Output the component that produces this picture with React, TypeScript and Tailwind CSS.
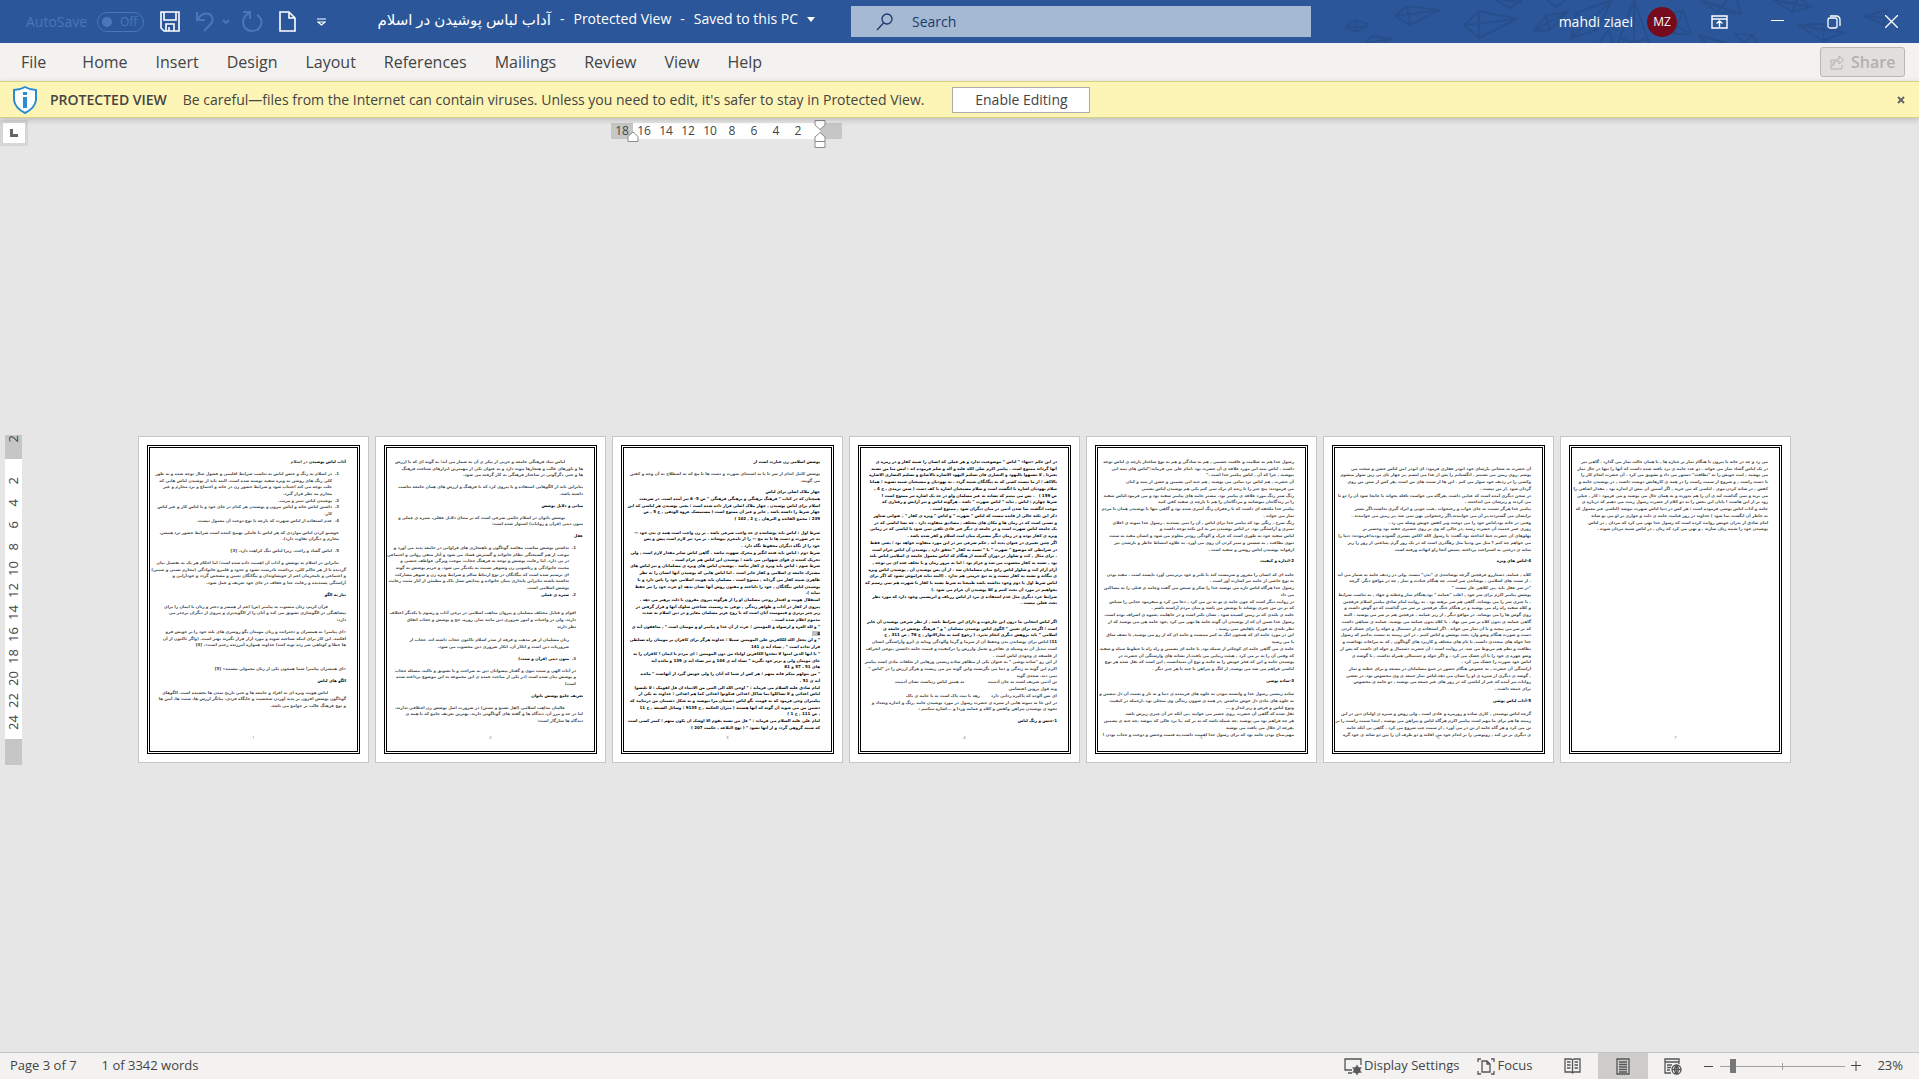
import type { ReactNode } from "react";

type Line = {
  text?: string;
  bold?: boolean;
  num?: string;
  indent?: "first" | "list" | "block";
  // tall blank between two paragraphs
  gap?: boolean;
  lead?: string;
  marked?: boolean;
};

const gap: Line = { gap: true };
const blank: Line = {};

function plain(...texts: string[]): Line[] {
  return texts.map((text) => ({ text }));
}

function heavy(...texts: string[]): Line[] {
  return texts.map((text) => ({ text, bold: true }));
}

function indented(indent: Line["indent"], ...texts: string[]): Line[] {
  return texts.map((text) => ({ text, indent }));
}

const pages: Line[][] = [
  [
    { lead: "آداب لباس پوشیدن", text: " در اسلام" },
    gap,
    { num: "1.", indent: "list", text: "در اسلام به رنگ و جنس لباس به تناسب شرایط اقلیمی و فصول سال توجه شده و به طور" },
    ...indented(
      "list",
      "کلی رنگ های روشن به ویژه سفید توصیه شده است. البته باید از پوشیدن لباس هایی که",
      "جلب توجه می کند اجتناب شود و شرایط حضور زن در خانه و اجتماع و نزد محارم و غیر",
      "محارم مد نظر قرار گیرد.",
    ),
    { num: "2.", indent: "list", text: "پوشیدن لباس تمیز و مرتب." },
    { num: "3.", indent: "list", text: "داشتن لباس خانه و لباس بیرون و پوشیدن هر کدام در جای خود و یا لباس کار و غیر لباس" },
    { indent: "list", text: "کار." },
    { num: "4.", indent: "list", text: "عدم استفاده از لباس شهرت که پارچه یا نوع دوخت آن معمول نیست." },
    gap,
    ...indented(
      "block",
      "خوشبو کردن لباس مواردی که هر لباس یا عاملی تهییج کننده است شرایط حضور نزد همسر،",
      "محارم و دیگران تفاوت دارد).",
    ),
    gap,
    { num: "5.", indent: "list", text: "لباس گشاد و راحت. زیرا لباس تنگ کراهت دارد. [3]" },
    gap,
    { indent: "block", text: "بنابراین در اسلام به پوشش و آداب آن اهمیت داده شده است؛ اما احکام هر یک به تفصیل بیان" },
    ...plain(
      "گردیده تا از هر حاکم کلی، برداشت نادرست نشود و حدود و قلمرو خانوادگی (محارم نسبی و سببی)",
      "و اجتماعی و نامحرمان اعم از خویشاوندان و بیگانگان تعیین و مشخص گردد و خودآرایی و",
      "آراستگی پسندیده و رعایت حیا و عفاف در جای خود تعریف و عمل شود.",
    ),
    gap,
    ...heavy("نیاز به الگو"),
    gap,
    { indent: "first", text: "قرآن کریم، زنان منسوب به پیامبر (ص) اعم از همسر و دختر و زنان با ایمان را برای" },
    ...plain("پیشاهنگی در الگوسازی تشویق می کند و آنان را از الگوپذیری و پیروی از دیگران برحذر می", "دارد:"),
    gap,
    ...plain(
      "«ای پیامبر! به همسران و دخترانت و زنان مومنان بگو روسری های بلند خود را بر خویش فرو",
      "افکنند. این کار برای اینکه شناخته شوند و مورد آزار قرار نگیرند بهتر است. (واگر تاکنون از آن",
      "ها خطا و کوتاهی سر زده توبه کنند) خداوند همواره آمرزنده رحیم است». [4]",
    ),
    gap,
    blank,
    gap,
    ...plain("«ای همسران پیامبر! شما همچون یکی از زنان معمولی نیستید» [5]"),
    gap,
    ...heavy("الگو های لباس"),
    gap,
    { indent: "first", text: "لباس هویت ویژه ای به افراد و جامعه ها و حتی تاریخ تمدن ها بخشیده است. الگوهای" },
    ...plain(
      "گوناگون پوشش افزون بر پدید آوردن شخصیت و جایگاه فردی، بیانگر ارزش ها، سنت ها، آیین ها",
      "و نوع فرهنگ غالب بر جوامع می باشد.",
    ),
  ],
  [
    { indent: "first", text: "لباس نماد فرهنگی جامعه و جزیی از پیکر ی آن به شمار می آید؛ به گونه ای که با ارزش" },
    ...plain(
      "ها و باورهای غالب و هنجارها پیوند دارد و به عنوان یکی از مهمترین ابزارهای شناخت فرهنگ",
      "ها و حتی دگرگونی در ساختار فرهنگی به کار گرفته می شود.",
    ),
    gap,
    ...plain("بنابراین باید از الگوهایی استفاده و یا پیروی کرد که با فرهنگ و ارزش های همان جامعه تناسب", "داشته باشد."),
    gap,
    ...heavy("مبانی و دلایل پوشش"),
    gap,
    { indent: "first", text: "پوشش بانوان در اسلام حکمی شرعی است که بر مبنای دلایل عقلی، سیره ی عملی و" },
    ...plain("متون دینی (قرآن و روایات) استوار شده است:"),
    gap,
    ...heavy("عقل"),
    gap,
    { num: "1.", indent: "list", text: "نداشتن پوشش مناسب مفاسد گوناگون و ناهنجاری های فراوانی در جامعه پدید می آورد و" },
    ...indented(
      "list",
      "موجب از هم گسیختگی نظام خانواده و گسترش فساد می شود و آثار منفی روانی و اجتماعی",
      "در پی دارد. اما رعایت پوشش و توجه به فرهنگ حجاب، موجب ویژگی عواطف جنسی و",
      "محبت خانوادگی و زناشویی زن وشوهر نسبت به یکدیگر می شود. و حریم پوشش به گونه",
      "ای ترسیم شده است که بیگانگان در نوع ارتباط سالم و شرایط ویژه زن و شوهر مشارکت",
      "نداشته باشند بنابراین پایداری بنیان خانواده و پیدایش نسل پاک و مطمئن از آثار مثبت رعایت",
      "پوشش اسلامی است.",
    ),
    { num: "2.", indent: "list", bold: true, text: "سیره ی عملی" },
    gap,
    blank,
    ...indented(
      "block",
      "اقوام و قبایل مختلف مسلمان و پیروان مذاهب اسلامی در برخی آداب و رسوم با یکدیگر اختلاف",
      "دارند، ولی در واجبات و امور ضروری دین مانند نماز، روزه، حج و پوشش و حجاب اتفاق",
      "نظر دارند",
    ),
    blank,
    ...indented(
      "list",
      "زنان مسلمان از هر مذهب و فرقه از صدر اسلام تاکنون حجاب داشته اند. حجاب از",
      "ضروریات دین است و انکار آن، انکار ضروری دین محسوب می شود.",
    ),
    gap,
    { num: "3.", indent: "list", bold: true, text: "متون دینی (قرآن و سنت)" },
    gap,
    ...indented(
      "block",
      "در آیات الهی و سنت نبوی و گفتار پیشوایان دین به صراحت و با تشویق و تاکید، مسئله حجاب",
      "و پوشش بیان شده است (در یکی از مباحث عمده ی این مجموعه به این موضوع پرداخته شده",
      "است)",
    ),
    gap,
    ...heavy("تعریف جامع پوشش بانوان"),
    gap,
    { indent: "first", text: "عالمان مذاهب اسلامی (اهل تشیع و تسنن) در ضرورت اصل پوشش زن اختلافی ندارند،" },
    ...plain("اما در حد و مرز آن، دیدگاه ها و گفته های گوناگونی دارند. بهترین تعریف جامع که با همه ی", "دیدگاه ها سازگار است:"),
  ],
  [
    ...heavy("پوشش اسلامی زن عبارت است از"),
    gap,
    ...plain("پوشش کامل اندام از سر تا پا به استثنای صورت و دست ها تا مچ که به اصطلاح به آن وجه و کفین", "می گویند."),
    gap,
    ...heavy(
      "چهار ملاک اصلی برای لباس",
      "همچنان که در کتاب \" فرهنگ برهنگی و برهنگی فرهنگی \" ص 5- 6 نیز آمده است. در شریعت",
      "اسلام برای لباس پوشیدن , چهار ملاک اصلی قرار داده شده است ؛ یعنی پوشیدن هر لباسی که این",
      "چهار شرط را داشته باشد , جایز و غیر آن ممنوع است ( مستمسک عروة الوثقی , ج 5 , ص",
      "239 ؛ مجمع الفائده و البرهان , ج 2 , 102 )",
    ),
    blank,
    ...heavy(
      "شرط اول : لباس باید پوشاننده ی حد واجب شرعی باشد . بر زن واجب است همه ی بدن خود —",
      "به جز صورت و دست ها تا به مچ — را از نامحرم بپوشاند . بر مرد نیز لازم است پیش و پس",
      "خود را از نگاه دیگران محفوظ نگاه دارد .",
      "شرط دوم : لباس باید فتنه انگیز و محرک شهوت نباشد . گاهی لباس ساتر مقدار لازم است , ولی",
      "تحریک کننده ی قوای شهوانی می باشد ؛ پوشیدن این لباس هم حرام است .",
      "شرط سوم : لباس باید ویژه ی کفار نباشد . پوشیدن لباس های ویژه ی مسلمانان و نیز لباس های",
      "مشترک جامعه ی اسلامی و کفار جایز است . اما لباس هایی که پوشیدن آنها انسان را به نظر",
      "ظاهری شبیه کفار می گرداند , ممنوع است . مسلمان باید هویت اسلامی خود را پاس دارد و با",
      "پوشیدن لباس بیگانگان , خود را دلباخته و مفتون روش آنها نشان ندهد (و عزت خود را نیز حفظ",
      "نماید ).",
      "استقلال هویت و اقتدار روحی مسلمان او را از هرگونه پیروی مقرون با ذلت پرهیز می دهد .",
      "پیروی از کفار در آداب و ظواهر زندگی , نوعی به رسمیت شناختن سلوک آنها و قرار گرفتن در",
      "زیر چتر برتری و قیمومیت آنان است که با روح عزیز مسلمان مغایر و در دین اسلام به شدت",
      "مذموم اعلام شده است .",
      "\" و لله العزة و لرسوله و للمؤمنین ؛ عزت از آن خدا و پیامبر او و مومنان است \" , منافقون آیه ی",
    ),
    { text: "8", bold: true, marked: true },
    ...heavy(
      "\" و لن یجعل الله للکافرین علی المومنین سبیلا ؛ خداوند هرگز برای کافران بر مومنان راه تسلطی",
      "قرار نداده است \" , نساء آیه ی 141",
      "\" یا ایها الذین امنوا لا تتخذوا الکافرین اولیاء من دون المومنین ؛ ای مردم با ایمان ! کافران را به",
      "جای مومنان ولی و برتر خود نگیرید \" نساء آیه ی 144 و نیز نساء آیه ی 139 و مائده آیه",
      "های 51 ، 57 و 81",
      "\" من یتولهم منکم فانه منهم ؛ هر کس از شما که آنان را ولی خویش گیرد از آنهاست \" مائده",
      "آیه ی 51 .",
      "امام صادق علیه السلام می فرماید : \" اوحی الله الی النبی من الانبیاء ان قل لقومک : لا تلبسوا",
      "لباس اعدائی و لا تشاکلوا بما شاکل اعدائی فتکونوا اعدائی کما هم اعدائی ؛ خداوند به یکی از",
      "پیامبران وحی فرمود که به قومت بگو لباس دشمنان مرا نپوشید و به شکل دشمنان من درنیایید که",
      "دشمن من می شوید آن گونه که آنها هستند ( میزان الحکمة , ح 9135 ؛ وسائل الشیعه , ج 11",
      ", ص 111 , ح 1 )",
      "امام علی علیه السلام می فرماید : \" قل من تشبه بقوم الا اوشک ان یکون منهم ؛ کمتر کسی است",
      "که شبیه گروهی گردد و از آنها نشود \" ( نهج البلاغه , حکمت 207 )",
    ),
  ],
  [
    ...heavy(
      "در این حکم «تنها» \" لباس \" موضوعیت ندارد و هر عملی که انسان را شبیه کفار و در زمره ی",
      "آنها گرداند ممنوع است . پیامبر اکرم صلی الله علیه و آله و سلم فرموده اند : لیس منا من تشبه",
      "بغیرنا , لا تشبهوا بالیهود و النصاری فان تسلیم الیهود الاشاره بالاصابع و تسلیم النصاری الاشاره",
      "بالاکف ؛ از ما نیست کسی که به بیگانگان شبیه گردد . به یهودیان و مسیحیان شبیه نشوید ؛ همانا",
      "سلام یهودیان اشاره با انگشت است و سلام مسیحیان اشاره با کف دست ( سنن ترمذی , ج 4 ,",
      "ص 159 )   . پس می بینیم که تشابه به غیر مسلمان ولو در حد یک اشاره نیز ممنوع است !",
      "شرط چهارم : لباس , نباید \" لباس شهرت \" باشد . هرگونه لباس و نیز آرایش و رفتاری که",
      "موجب انگشت نما شدن آدمی در میان دیگران شود , ممنوع است .",
      "ذکر این نکته خالی از فایده نیست که لباس \" شهرت \" و لباس \" ویژه ی کفار \" , عنوانی شناور",
      "و نسبی است که در زمان ها و مکان های مختلف , مصادیق متفاوت دارد . چه بسا لباسی که در",
      "یک جامعه لباس شهرت است و در جامعه ی دیگر غیر عادی تلقی نمی شود یا لباسی که در زمانی",
      "ویژه ی کفار بوده و در زمان دیگر مشترک میان امت اسلام و کفر شده باشد .",
      "اگر چنین تغییری در عنوان پدید آید , حکم شرعی نیز در این مورد متفاوت خواهد بود ؛ یعنی فقط",
      "در شرایطی که موضوع \" شهرت \" یا \" تشبه به کفار \" تحقق دارد , پوشیدن آن لباس حرام است",
      ". برای مثال , کت و شلوار در دوران گذشته از هنگام که لباس معمول جامعه ی اسلامی لباس بلند",
      "بود , تشبه به کفار محسوب می شد و حرام بود ؛ اما به مرور زمان و با تخلف عده ای بی توجه ,",
      "آرام آرام کت و شلوار لباس رایج میان مسلمانان شد . از آن پس پوشیدن آن , پوشیدن لباس ویژه",
      "ی بیگانه و تشبه به کفار نیست و به تبع حرمتی هم ندارد . (البته نباید فراموش نشود که اگر برای",
      "لباس شرط اول یا دوم وجود نداشته باشد طبیعتا به شرط تشبه با کفار یا شهرت هم نمی رسیم که",
      "بخواهیم در مورد آن بحث کنیم و کلا پوشیدن آن حرام می شود .)",
      "شرایط خرد دیگری مثل عدم استفاده ی مرد از لباس زرباف و ابریشمی وجود دارد که مورد نظر",
      "بحث فعلی نیست .",
    ),
    gap,
    blank,
    ...heavy(
      "اگر لباس انتخابی ما درون این چارچوب و دارای این شرایط باشد , از نظر شرعی پوشیدن آن جایز",
      "است ؛ اگرچه برای تعیین \" الگوی لباس پوشیدن مسلمان \" و \" فرهنگ پوشش در جامعه ی",
      "اسلامی \" باید پژوهش دیگری انجام پذیرد. ( رجوع کنید به بحارالانوار , ج 76 , ص 311 , ح",
    ),
    { lead: "11)", text: " لباس برای پوشاندن بدن وحفظ آن از سرما و گرما وآلودگی ومایه ی آبرو وآراستگی انسان" },
    ...plain(
      "است تبدیل آن به وسیله ی تفاخر و تجمل وارزش را درکیفیت و قیمت جامه دانستن ,نوعی انحراف",
      "از فلسفه ی وجودی لباس است .",
      "از این رو \"ساده پوشی \" به عنوان یکی از مظاهر ساده زیستی ورهایی از تعلقات مادی است پیامبر",
      "اکرم این گونه به زندگی و دنیا می نگریست واین گونه نیز می زیست و هرگز ارزش را در \"لباس \"",
      "نمی دید. سعدی گوید",
      "تن آدمی شریف است به جان آدمیت                 نه همین لباس زیباست نشان آدمیت",
      "وبه قول پروین اعتصامی",
      "ای بس آلوده که پاکیزه ردایی دارد        زهد با نیت پاک است نه با جامه ی پاک",
      "در این جا به نمونه هایی از سیره ی حضرت رسول در مورد پوشیدن جامه ,رنگ و اندازه وتعداد و",
      "نحوه ی پوشیدن پیراهن وکفش و کلاه و عمامه وردا و ...اشاره میکنیم :",
    ),
    gap,
    ...heavy("1-جنس و رنگ لباس"),
  ],
  [
    ...plain(
      "رسول خدا هم به سلامت و عافیت جسمی , هم به سادگی و هم به نوع ساختار پارچه ی لباس توجه",
      "داشت . لباس پنبه ایی مورد علاقه ی آن حضرت بود .امام علی می فرماید:\"لباس های پنبه ایی",
      "بپوشید , چرا که آن , لباس پیامبر خدا است .\"",
      "آن حضرت , هم لباس برد یمانی می پوشید , هم جبه ایی پشمین و خشن از پنبه و کتان",
      "می فرمودند: پنج چیز را تا زنده ام ترک نمی کنم یکی هم پوشیدن لباس پشمی",
      "رنگ سبز رنگ مورد علاقه ی پیامبر بود. بیشتر جامه های پیامبر سفید بود و می فرمود:لباس سفید",
      "را بر زندگانتان بپوشانید و مردگانتان را هم با پارچه ی سفید کفن کنید",
      "پیامبر خدا ملحفه ای داشت که با زعفران رنگ آمیزی شده بود و گاهی تنها با پوشیدن همان با مردم",
      "نماز می خواند .",
      "رنگ سرخ , رنگی بود که پیامبر خدا برای لباس , آن را نمی پسندید . رسول خدا نمونه ی اعلای",
      "تمیزی و آراستگی بود. در لباس پوشیدن نیز به این نکته توجه داشت و",
      "لباس سفید خود به طوری است که چرک و آلودگی زودتر معلوم می شود و انسان مقید به سنت",
      "نبوی نظافت , به شستن و تمیز کردن آن روی می آورد. به علاوه انبساط خاطر و بازشدن نیز",
      "ازفواید پوشیدن لباس روشن و سفید است .",
    ),
    gap,
    ...heavy("2-اندازه و کیفیت"),
    blank,
    ...plain(
      "جامه ای که انسان را مغرور و سرمست کند یا تکبر و خود برتربینی آورد ناپسند است . مقید بودن",
      "به نوع خاصی از جامه نیز اسارت آور است .",
      "رسول خدا هرگاه لباس تازه می پوشید خدا را شکر و سپس می گفت وجامه ی قبلی را به مساکین",
      "می داد",
      "در روایت دیگر است که چون جامه ی نو به تن می کرد , دعا می کرد و میفرمود خدایی را سپاس",
      "که بر تن من چیزی پوشاند تا پوشش من باشد و میان مردم آراسته باشم .",
      "جامه ی بلندی که بر زمین کشیده شود , نشان تکبر است و در جاهلیت ,شیوه ی اشراف بوده است.",
      "رسول خدا ضمن آن که از پوشیدن آن گونه جامه ها نهی می کرد ,خود جامه هی می پوشید که از",
      "نظر بلندی به قوزک پاهایش نمی رسید .",
      "این در مورد جامه ای که همچون لنگ به کمر میبست و جامه ای که از رو می پوشید, تا نصف ساق",
      "پا می رسید",
      "جامه ی می گاهی جامه ای کوچکتر از شمله بود, یا جامه ای پشمین و راه راه با خطوط سیاه و سفید",
      "که وقتی آن را به بر می کرد , هیئت زیبایی می یافت.از نشانه های وارستگی آن حضرت در",
      "پوشیدن جامه و این که فخر خویش را به جامه و نوع آن نمیدانست , این است که نقل شده هر نوع",
      "لباسی فراهم می شد می پوشید, از لنگ و پیراهن یا جبه یا هر چیز دیگر .",
    ),
    gap,
    ...heavy("3-ساده پوشی"),
    blank,
    ...plain(
      "ساده زیستی رسول خدا و وابسته نبودن به جلوه های فریبنده ی دنیا و به ناز و نعمت آن دل نبستن و",
      "به جلوه های مادی دل خوش نداشتن ,در همه ی شوون زندگی وی متجلی بود .ازجمله در کیفیت",
      "ونوع لباس و فرش و زیر انداز و ...",
      "نقل شده که گاهی آن حضرت ,روی حصیر می خوابید ,بی آنکه جز آن چیزی زیرش باشد",
      "هر چه فراهم بود می پوشید ,چه شمله باشد که به بر کند ,یا برد عالی که بپوشد ,چه جبه ی پشمین",
      ",هرچه از حلال می یافت می پوشید",
      "مهم,مباح بودن جامه بود که برای رسول خدا اهمیت داشت,نه قیمت وجنس و دوخت و جذاب بودن !",
    ),
  ],
  [
    blank,
    ...plain(
      "آن حضرت به صحابی پارسای خود ابوذر غفاری فرمود: ای ابوذر !من لباس خشن و سخت می",
      "پوشم ,روی زمین می نشینم , انگشتانم را پس از غذا می لیسم ,بر چهار پای بی زین سوار میشوم",
      "وکسی را در ردیف خود سوار می کنم . این ها از سنت های من است ,هر کس از سنن من روی",
      "گردان شود ,از من نیست .",
      "در سخن دیگری آمده است که عبایی داشت ,هرگاه می خواست نافله بخواند یا جابجا شود آن را دو تا",
      "می کردند و زیرشان می انداختند .",
      "پیامبر خدا هرگز نسبت به جای خواب و رختخواب ,عیب جویی و ایراد گیری نداشت.اگر بستر",
      "برایشان می گستردند,بر آن می خوابیدند,اگر رختخوابی پهن نمی شد ,بر زمین می خوابیدند .",
      "وقتی در خانه بود,لباس خود را می دوخت وبر کفش خویش وصله می زد .",
      "روزی عمر خدمت آن حضرت رسید ,در حالی که وی بر روی حصیری خفته بود وحصیر بر",
      "پهلوهای آن حضرت خط انداخته بود.گفت: یا رسول الله !کاش بستری گشوده بودید!فرمودند: دنیا را",
      "می خواهم چه کنم ؟ مثل من ودنیا مثل رهگذری است که در یک روز گرم ,ساعتی از روز را زیر",
      "سایه ی درختی به استراحت پرداخته ,سپس آنجا راو انهاده ورفته است",
    ),
    gap,
    ...heavy("4-لباس های ویژه"),
    blank,
    ...plain(
      "کلاه , عمامه, دستاررو عرقچین گرچه پوشانندی ی \"بدن\" نیست ,ولی در ردیف جامه به شمار می آید",
      ". از سنت های اسلامی , پوشاندن سر است, چه هنگام عبادت و نماز , چه در مواقع دیگر. گرچه",
      "\"در سر عقل باید ,بی کلاهی عار نیست \"",
      "پوشش پیامبر اکرم برای سر خود , اغلب \"عمامه \" بود,هنگام نماز وخطبه و جهاد , به تناسب شرایط",
      ", با چیزی سر را می پوشاند. گاهی هم سر برهنه بود . به روایت امام صادق پیامبر اسلام عرقچین",
      "و کلاه سفید راه راه می پوشید و در هنگام جنگ عرقچین بر سر می گذاشت که دو گوش داشت و",
      "روی گوش ها را می پوشاند. در مواقع دیگر , از زیر عمامه , عرقچین هم بر سر می پوشید . البته",
      "گاهی عمامه ی بدون کلاه بر سر می نهاد . یا کلاه بدون عمامه می پوشید. عمامه ی سیاهی داشت",
      "که بر سر می پیچید و با آن نماز می خواند . اگر استفاده ی از دستمال و حوله را برای خشک کردن",
      "دست و صورت هنگام وضو وارد بحث پوشش و لباس کنیم , در این زمینه بد نیست بدانیم که رسول",
      "خدا حوله های متعددی داشت, با نام های مختلف و کاربرد های گوناگون , که به مراعات بهداشت و",
      "نظافت و نظم هم مربوط می شد. در روایت است : آن حضرت دستمال و حوله ای داشت که پس از",
      "وضو چهره ی خود را با آن خشک می کرد . و اگر حوله و دستمالی همراه نداشت , با گوشه ی",
      "لباس خود صورت را خشک می کرد .",
      "آراستگی آن حضرت , به خصوص هنگام حضور در جمع مسلمانان در مسجد و برای خطبه و نماز",
      ", گوشه ی دیگری از سیره ی او را نشان می دهد.لباس نماز جمعه ی وی مخصوص بود. در بعضی",
      "روایات نیز آمده که غیر از لباسی که در روز های غیر جمعه می پوشید , دو جامه ی مخصوص",
      "برای جمعه داشت .",
    ),
    gap,
    ...heavy("5-آداب لباس پوشی"),
    blank,
    ...plain(
      "گرچه لباس پوشیدن , کاری ساده و روزمره و عادی است , ولی روش و سیره ی اولیای دین در این",
      "زمینه ها هم برای ما مهم است پیامبر اکرم هرگاه لباس و پیراهن می پوشید , ابتدا سمت راست را بر",
      "تن می کرد و هر گاه جامه از تن در می آورد , از سمت چپ شروع می کرد . گاهی بی آنکه جامه",
      "ی دیگری بر تن کند , روپوشی را بر اندام خود می افکند و دو طرف آن را بین دو شانه ی خود گره",
    ),
  ],
  [
    ...plain(
      "می زد و چه در خانه یا بیرون یا هنگام نماز بر جنازه ها , با همان حالت نماز می گذارد . گاهی نیز",
      "در یک لباس گشاد نماز می خواند . دو عدد جامه ی برد بافته شده داشت که آنها را تنها در حال نماز",
      "می پوشید , امت خویش را به \"نظافت\" دستور می داد و تشویق می کرد . آن حضرت انجام کار را",
      "با دست راست , و شروع از سمت راست را در همه ی کارهایش دوست داشت , در پوشیدن جامه و",
      "کفش , در شانه کردن موی . لباسی که می خرید , اگر آستین آن بیش از اندازه بود , مقدار اضافی را",
      "می برید و نمی گذاشت لبه ی آن را هم بدوزند و به همان حال می پوشید و می فرمود : کار , خیلی",
      "زود تر از این هاست ! پایان این بخش را به دو کلام از حضرت رسول زینت می دهیم که درباره ی",
      "جامه و آداب لباس پوشی فرموده است : هر کس در دنیا لباس شهرت بپوشد (لباسی غیر معمول که",
      "به خاطر آن انگشت نما شود ) خداوند در روز قیامت جامه ی ذلت و خواری بر او می پو شاند",
      "امام صادق از پدران خویش روایت کرده است که رسول خدا نهی می کرد که مردان , در لباس",
      "پوشیدن خود را شبیه زنان سازند , و نهی می کرد که زنان , در لباس شبیه مردان شوند .",
    ),
  ],
];

const tabs = ["Home", "Insert", "Design", "Layout", "References", "Mailings", "Review", "View", "Help"];
const columns = [16, 14, 12, 10, 8, 6, 4, 2];
const rows = [2, 4, 6, 8, 10, 12, 14, 16, 18, 20, 22, 24];

function TextLine({ line }: { line: Line }) {
  if (line.gap) {
    return <div className="row-span-3" />;
  }
  const pad =
    line.indent === "first" ? "pr-[18px]" : line.indent === "list" ? "pr-[14px]" : line.indent === "block" ? "pr-[7px]" : "";

  // at this size the regular weight is too thin to read, so tone tells body from bold
  return (
    <p className={`relative row-span-4 font-bold whitespace-pre ${pad} ${line.bold ? "text-black" : "text-[#4a4a4a]"}`}>
      {line.num && <span className="absolute right-[7px] text-[#4a4a4a]">{line.num}</span>}
      {line.lead && <b className="text-black">{line.lead}</b>}
      {line.marked ? <span className="bg-[#c0c0c0] pl-[5px]">{line.text}</span> : line.text}
    </p>
  );
}

function Page({ lines, number }: { lines: Line[]; number: number }) {
  return (
    <article className="w-[231px] shrink-0 border border-[#c6c6c6] bg-white p-2">
      <div className="h-[309px] border-[3px] border-double border-black px-[11px] pt-[10px]">
        <div
          dir="rtl"
          className="grid h-[276px] grid-rows-[repeat(164,minmax(0,1fr))] font-['DejaVu_Sans',sans-serif] text-[4px] leading-[7px]"
        >
          {lines.map((line, i) => (
            <TextLine key={i} line={line} />
          ))}
        </div>
        <p className="text-center text-[4px] leading-[7px] text-[#666]">{number}</p>
      </div>
    </article>
  );
}

function Kites() {
  return (
    <svg
      className="pointer-events-none absolute top-0 right-0 h-[43px] w-[580px]"
      viewBox="0 0 580 43"
      fill="none"
      stroke="#284f8c"
      strokeWidth="2"
    >
      <path d="M7 27 16 20 29 24 18 32Z M7 27H29 M16 20 18 32" />
      <path d="M56 16 68 6 100 10 71 25Z M56 16 100 10 M68 6 71 25" />
      <path d="M125 25 140 11 178 19 140 38Z M125 25 178 19 M140 11V38" />
      <path d="M27 43 33 36 52 39 44 43 M27 43 52 39" />
      <path d="M156 0 170 8 183 0 M160 0 183 2 M208 0 217 7 227 0" />
      <path d="M195 31 207 15 228 12 211 30Z M195 31 228 12 M207 15 211 30" />
      <path d="M232 38 237 13 273 0 258 30Z M232 38 273 0 M237 13 258 30" />
      <path d="M260 43 270 30 274 43 M279 43 295 0 310 43 M295 0V43 M281 38 295 43 307 38" />
      <path d="M322 18 344 10 352 34 335 34Z M322 18 352 34 M344 10 335 34" />
      <path d="M361 0 378 12 402 14 398 0 M361 0 402 14 M378 12 388 0" />
      <path d="M359 35 387 43 M359 35 367 43 M395 34 414 35 417 43 M395 34 405 43 414 35" />
      <path d="M434 0 453 12 472 7 462 0 M434 0 472 7 M453 12 458 0" />
      <path d="M459 25 504 33 484 41Z M459 25 485 24 504 33 M485 24 484 41" />
      <path d="M525 16 548 10 545 25Z M525 16 545 18" />
    </svg>
  );
}

function TitleBar() {
  return (
    <header className="relative flex h-[43px] items-center bg-[#2b579a] text-white">
      <Kites />
      <div className="relative flex h-full w-[851px] shrink-0 items-center pl-[26px]">
        <label htmlFor="autosave" className="w-[71px] text-sm text-[#4a77b5]">
          AutoSave
        </label>
        <span className="relative flex h-5 w-[47px] items-center rounded-full border border-[#4a77b5] pl-[22px] text-xs text-[#4a77b5]">
          <input
            id="autosave"
            type="checkbox"
            disabled
            className="absolute left-1 h-[10px] w-[10px] appearance-none rounded-full bg-[#4a77b5]"
          />
          Off
        </span>
        <button type="button" aria-label="Save" className="ml-4">
          <svg width="20" height="21" viewBox="0 0 20 21" fill="none" stroke="white" strokeWidth="1.600">
            <path d="M1 1H19V20H4L1 17Z M4 1V9H16V1 M6 20V13H14V20 M9 16V20" />
          </svg>
        </button>
        <button type="button" aria-label="Undo" className="ml-4">
          <svg width="18" height="21" viewBox="0 0 18 21" fill="none" stroke="#4a77b5" strokeWidth="2">
            <path d="M1 1V9H9 M2 8C6 1 14 1 16 6C18 11 14 14 8 20" />
          </svg>
        </button>
        <svg className="ml-2" width="8" height="5" viewBox="0 0 8 5" fill="none" stroke="#4a77b5" strokeWidth="2">
          <path d="M1 1 4 4 7 1" />
        </svg>
        <button type="button" aria-label="Redo" className="ml-3">
          <svg width="21" height="21" viewBox="0 0 21 21" fill="none" stroke="#4a77b5" strokeWidth="2">
            <path d="M1 1H8V8 M8 2C0 5 0 13 3 17C7 21 15 21 18 16C21 11 19 6 15 4" />
          </svg>
        </button>
        <button type="button" aria-label="New document" className="ml-4">
          <svg width="17" height="21" viewBox="0 0 17 21" fill="none" stroke="white" strokeWidth="1.600">
            <path d="M1 1H10L16 7V20H1Z M10 1V7H16" />
          </svg>
        </button>
        <button type="button" aria-label="Customize" className="ml-[21px]">
          <svg width="9" height="8" viewBox="0 0 9 8" fill="none" stroke="white" strokeWidth="1.200">
            <path d="M0 1H9 M1 4H8L4.500 7Z" />
          </svg>
        </button>
        <h1 className="mr-9 ml-auto flex items-center gap-[9px] pb-1 text-sm whitespace-nowrap">
          <span dir="rtl" className="text-[15px]">
            آداب لباس پوشیدن در اسلام
          </span>
          <span>-</span>
          <span>Protected View</span>
          <span>-</span>
          <span>Saved to this PC</span>
          <svg width="8" height="5" viewBox="0 0 8 5" fill="white">
            <path d="M0 0H8L4 5Z" />
          </svg>
        </h1>
      </div>
      <label className="relative flex h-[31px] w-[460px] items-center bg-[#a5b9d3] pl-[25px] text-[#1b3a6b]">
        <svg width="17" height="18" viewBox="0 0 17 18" fill="none" stroke="currentColor" strokeWidth="1.300">
          <circle cx="11" cy="6" r="5" />
          <path d="M7.500 10 1 17" />
        </svg>
        <input
          type="text"
          placeholder="Search"
          className="ml-[19px] flex-1 bg-transparent text-sm outline-none placeholder:text-[#1b3a6b]"
        />
      </label>
      <div className="relative ml-auto flex items-center pr-[21px]">
        <span className="text-sm">mahdi ziaei</span>
        <span className="ml-[14px] flex h-[30px] w-[30px] items-center justify-center rounded-full bg-[#750b1c] text-xs">
          MZ
        </span>
        <button type="button" aria-label="Ribbon display options" className="ml-[34px]">
          <svg width="17" height="14" viewBox="0 0 17 14" fill="none" stroke="white" strokeWidth="1.400">
            <path d="M1 1H16V13H1Z M1 4H16 M8.500 12V6 M5.500 8.500 8.500 6 11.500 8.500" />
          </svg>
        </button>
        <button type="button" aria-label="Minimize" className="ml-[43px]">
          <svg width="13" height="13" viewBox="0 0 13 13" stroke="white">
            <path d="M0 5.500H13" />
          </svg>
        </button>
        <button type="button" aria-label="Restore" className="ml-[43px]">
          <svg width="14" height="14" viewBox="0 0 14 14" fill="none" stroke="white" strokeWidth="1.300">
            <rect x="1" y="3" width="9" height="10" rx="2" />
            <path d="M3 1H9Q13 1 13 5V11" />
          </svg>
        </button>
        <button type="button" aria-label="Close" className="ml-11">
          <svg width="13" height="13" viewBox="0 0 13 13" stroke="white" strokeWidth="1.300">
            <path d="M0 0 13 13 M13 0 0 13" />
          </svg>
        </button>
      </div>
    </header>
  );
}

function TabRow() {
  return (
    <nav className="flex h-[38px] items-center bg-[#f3f2f1] pr-[14px] pl-[21px] text-base text-[#444]">
      <button type="button" className="mr-[22px]">
        File
      </button>
      {tabs.map((tab) => (
        <button key={tab} type="button" className="px-[14px]">
          {tab}
        </button>
      ))}
      <button
        type="button"
        disabled
        className="ml-auto flex h-[30px] w-[85px] items-center gap-[7px] rounded-[3px] border border-[#bab8b7] bg-[#e1dfdd] pl-[9px] font-semibold text-[#b3b0ad]"
      >
        <svg width="14" height="15" viewBox="0 0 14 15" fill="none" stroke="currentColor">
          <path d="M5 5H1V14H12V10 M3 11C4 7 6 6 9 6V9L13.500 5 9 1V4C5 4 3 7 3 11Z" />
        </svg>
        Share
      </button>
    </nav>
  );
}

function MessageBar() {
  return (
    <section className="relative z-10 flex h-[37px] items-center border-y border-[#d7d282] bg-[#fdf5b6] pr-[14px] pl-[13px] text-sm text-[#444] shadow-[0_2px_6px_rgba(0,0,0,0.18)]">
      <svg width="24" height="28" viewBox="0 0 24 28" fill="none">
        <path d="M12 1Q17 4 23 4V14Q22 22 12 27Q2 22 1 14V4Q7 4 12 1Z" fill="white" stroke="#2a8dd4" strokeWidth="2" />
        <path d="M12 6V9 M12 11V22" stroke="#2a8dd4" strokeWidth="4" />
      </svg>
      <strong className="ml-[13px] font-semibold">PROTECTED VIEW</strong>
      <span className="ml-4">
        Be careful—files from the Internet can contain viruses. Unless you need to edit, it's safer to stay in Protected
        View.
      </span>
      <button type="button" className="ml-7 h-[26px] w-[138px] border border-[#ababab] bg-white">
        Enable Editing
      </button>
      <button type="button" aria-label="Close message" className="ml-auto">
        <svg width="8" height="8" viewBox="0 0 8 8" stroke="#666" strokeWidth="2">
          <path d="M1 1 7 7 M7 1 1 7" />
        </svg>
      </button>
    </section>
  );
}

function Marker({ className, children }: { className: string; children: ReactNode }) {
  return (
    <svg className={`absolute ${className}`} width="12" height="28" viewBox="0 0 12 28" fill="white" stroke="#8a8a8a">
      {children}
    </svg>
  );
}

function HorizontalRuler() {
  return (
    <div className="relative ml-[611px] flex h-4 w-[231px] bg-white text-xs leading-4 text-[#444]">
      <span className="w-[22px] bg-[#c6c6c6] text-center">18</span>
      {columns.map((n) => (
        <span key={n} className="w-[22px] text-center">
          {n}
        </span>
      ))}
      <span className="ml-auto w-[22px] bg-[#c6c6c6]" />
      <Marker className="top-0 left-4">
        <path d="M1 18.500V13.500L6 9 11 13.500V18.500Z" />
      </Marker>
      <Marker className="-top-[3px] left-[203px]">
        <path d="M1 .5H11V5L6 9.500 1 5Z M1 21.500V17L6 12.500 11 17V21.500Z M1 21.500H11V27.500H1Z" />
      </Marker>
    </div>
  );
}

function VerticalRuler() {
  return (
    <div className="ml-[5px] h-[330px] w-[17px] shrink-0 bg-white text-[13px] leading-[17px] text-[#444]">
      <div className="flex h-6 items-start justify-center bg-[#c6c6c6]">
        <span className="[writing-mode:sideways-lr]">2</span>
      </div>
      <div className="flex h-[280px] flex-col pt-[11px]">
        {rows.map((n) => (
          <span key={n} className="h-[22px] text-center [writing-mode:sideways-lr]">
            {n}
          </span>
        ))}
      </div>
      <div className="h-[26px] bg-[#c6c6c6]" />
    </div>
  );
}

function StatusBar() {
  return (
    <footer className="flex h-[27px] items-center border-t border-[#c8c6c4] bg-[#f3f2f1] pr-4 pl-[10px] text-[13px] text-[#444]">
      <span>Page 3 of 7</span>
      <span className="ml-[25px]">1 of 3342 words</span>
      <button type="button" className="ml-auto flex items-center gap-[2px]">
        <svg width="18" height="17" viewBox="0 0 18 17" fill="none" stroke="#555" strokeWidth="1.300">
          <path d="M8 12H1V1H17V7 M4 15H8" />
          <circle cx="13" cy="12" r="2.500" strokeWidth="2" />
          <path d="M13 7V17 M8.500 9.500 17.500 14.500 M17.500 9.500 8.500 14.500" />
        </svg>
        Display Settings
      </button>
      <button type="button" className="ml-[18px] flex items-center gap-[2px]">
        <svg width="18" height="17" viewBox="0 0 18 17" fill="none" stroke="#555" strokeWidth="1.300">
          <path d="M4 1H1V4 M14 1H17V4 M1 13V16H4 M17 13V16H14 M5 3H10L13 6V14H5Z M10 3V6H13" />
        </svg>
        Focus
      </button>
      <button type="button" aria-label="Read mode" className="ml-8">
        <svg width="17" height="16" viewBox="0 0 17 16" fill="none" stroke="#555" strokeWidth="1.300">
          <path d="M1 1H7L8.500 2 10 1H16V14H10L8.500 15 7 14H1Z M8.500 2V15 M3 4H6.500 M3 7H6.500 M3 10H6.500 M10.500 4H14 M10.500 7H14 M10.500 10H14" />
        </svg>
      </button>
      <button
        type="button"
        aria-label="Print layout"
        className="ml-[17px] flex h-[26px] w-[50px] items-center justify-center bg-[#cfcdcb]"
      >
        <svg width="14" height="17" viewBox="0 0 14 17" fill="none" stroke="#555" strokeWidth="1.300">
          <path d="M1 1H13V16H1Z M3 4H11 M3 6.500H11 M3 9H11 M3 11.500H11 M3 14H11" />
        </svg>
      </button>
      <button type="button" aria-label="Web layout" className="ml-4">
        <svg width="18" height="17" viewBox="0 0 18 17" fill="none" stroke="#555" strokeWidth="1.300">
          <path d="M7 15H1V1H15V6 M1 4H15 M3 7H8 M3 9.500H7 M3 12H6" />
          <circle cx="12.500" cy="11.500" r="4.500" />
          <path d="M8 11.500H17 M12.500 7V16 M12.500 7Q8.500 11.500 12.500 16 M12.500 7Q16.500 11.500 12.500 16" />
        </svg>
      </button>
      <button type="button" aria-label="Zoom out" className="ml-[22px] h-px w-[9px] bg-[#444]" />
      <span className="relative ml-[7px] flex w-[125px] items-center">
        <span className="absolute left-[62px] h-[7px] w-px bg-[#a0a0a0]" />
        <input
          type="range"
          aria-label="Zoom"
          min="0"
          max="100"
          defaultValue="8"
          className="relative h-px w-full appearance-none bg-[#a0a0a0] [&::-webkit-slider-thumb]:h-[14px] [&::-webkit-slider-thumb]:w-[6px] [&::-webkit-slider-thumb]:appearance-none [&::-webkit-slider-thumb]:bg-[#777]"
        />
      </span>
      <button type="button" aria-label="Zoom in" className="ml-[6px]">
        <svg width="10" height="10" viewBox="0 0 10 10" stroke="#444">
          <path d="M0 4.500H10 M5 0V10" />
        </svg>
      </button>
      <span className="ml-4">23%</span>
    </footer>
  );
}

export default function App() {
  return (
    <div className="flex h-screen flex-col overflow-hidden bg-[#e6e6e6] font-['Open_Sans','Noto_Sans','DejaVu_Sans',sans-serif]">
      <TitleBar />
      <TabRow />
      <MessageBar />
      <main className="flex min-h-0 flex-1 flex-col">
        <div className="relative pt-[5px]">
          <HorizontalRuler />
          <div className="absolute top-[2px] left-0 flex h-[26px] w-7 items-center justify-center bg-[#d6d6d6]">
            <span className="flex h-5 w-[22px] items-center justify-center bg-white">
              <svg width="8" height="8" viewBox="0 0 8 8" fill="none" stroke="#666" strokeWidth="3">
                <path d="M1.500 0V6.500H8" />
              </svg>
            </span>
          </div>
        </div>
        <div className="flex min-h-0 flex-1 items-center pt-2">
          <VerticalRuler />
          <div className="flex flex-1 justify-center gap-[6px] pr-3">
            {pages.map((lines, i) => (
              <Page key={i} lines={lines} number={i + 1} />
            ))}
          </div>
        </div>
      </main>
      <StatusBar />
    </div>
  );
}
